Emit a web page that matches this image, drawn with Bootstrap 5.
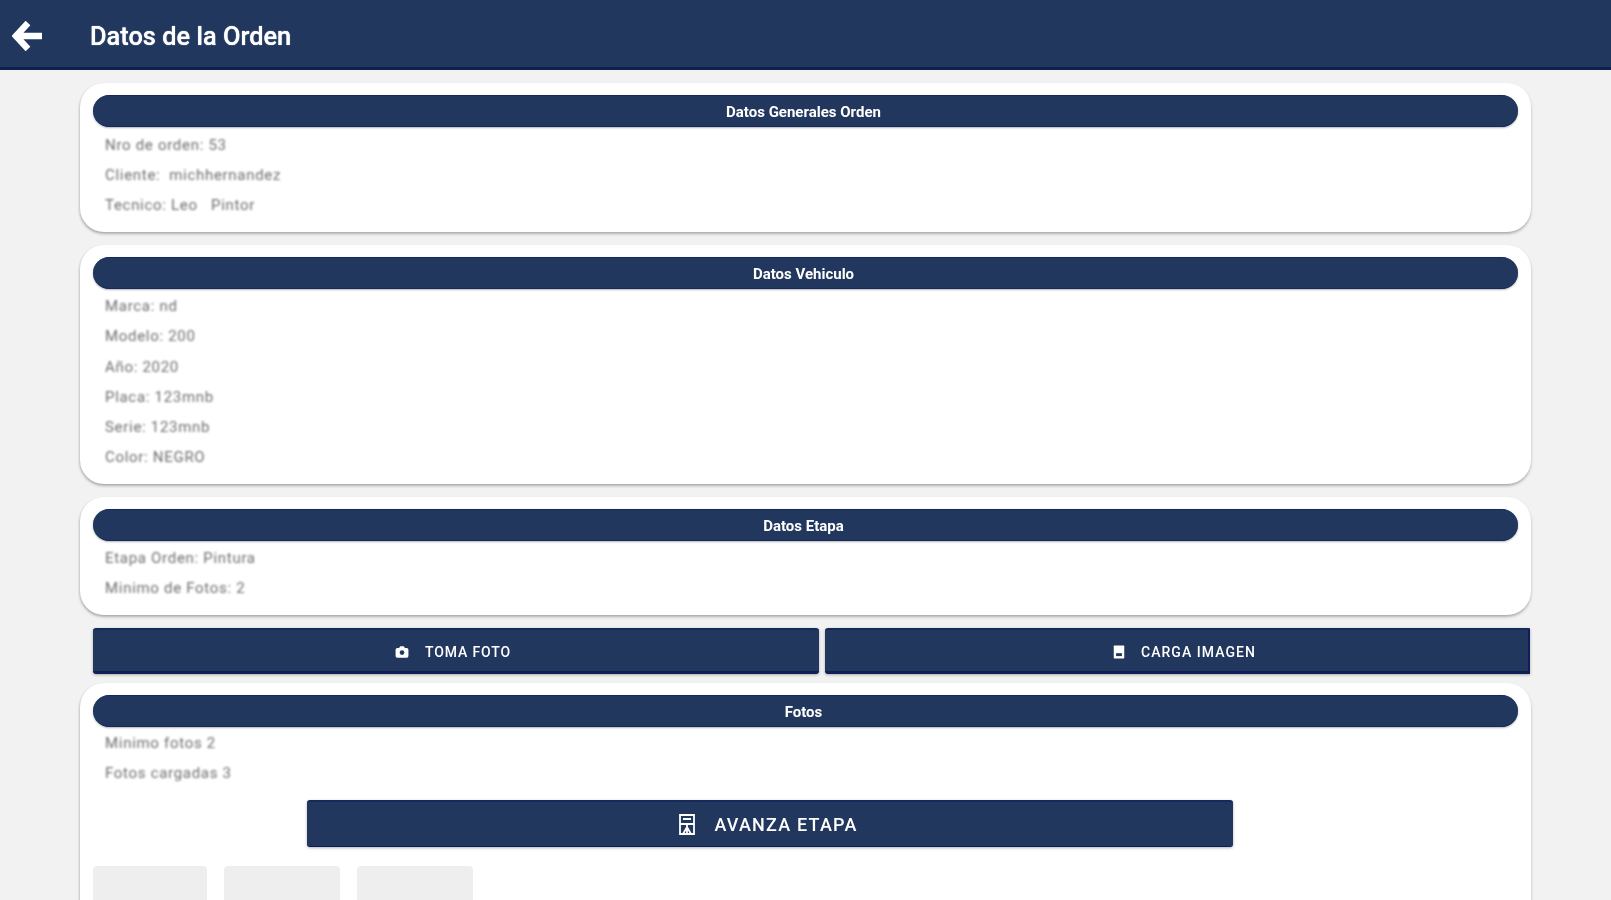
<!DOCTYPE html>
<html lang="es">
<head>
<meta charset="utf-8">
<title>Datos de la Orden</title>
<link rel="stylesheet" href="https://cdn.jsdelivr.net/npm/bootstrap@5.3.0/dist/css/bootstrap.min.css">
<style>
html, body { height: 900px; overflow: hidden; }
body { background: #f2f2f2; font-family: Roboto, sans-serif; color: #6f6f6f; }
.topbar { height: 70px; background: #21375e; border-bottom: 3px solid #0f1f50; color: #fff; padding: 5px 0 0 12px; }
.topbar h1 { font-size: 25.4px; font-weight: 500; margin: 0 0 0 46px; filter: blur(.5px); text-shadow: 0 0 1px #fff; }
.topbar svg { filter: blur(.6px); }
.page-wrap { width: 1451px; margin-left: 80px; padding-top: 13px; }
.info-panel { background: #fff; border-radius: 24px; padding: 12px 13px; margin-bottom: 12.6px; box-shadow: 0 2px 3px rgba(0,0,0,.25), -1px 1px 2px rgba(0,0,0,.08); }
.panel-first { padding-bottom: 11px; margin-bottom: 13.6px; }
.pill-head { height: 32px; background: #21375e; border-radius: 16px; border-top: 1px solid #142a5a; border-bottom: 1px solid #142a5a; color: #fff; font-size: 15px; font-weight: 700; text-align: center; line-height: 30px; padding: 0 4px 0 0; margin-bottom: 2px; box-shadow: 0 1px 2px rgba(0,0,0,.3); }
.pill-head span { filter: blur(.6px); display: inline-block; transform: translateY(1px); }
.pill-loose { margin-bottom: 3px; }
.pill-tight { margin-bottom: 1px; }
.data-row { height: 30.2px; line-height: 30.2px; padding-left: 12px; font-size: 15px; letter-spacing: .7px; white-space: pre; }
.data-row span { filter: blur(.9px); display: inline-block; }
.btn-row { gap: 6px; margin: 0 0 9px 13px; }
.btn-navy { background: #21375e; color: #fff; border: 0; border-top: 2px solid #142a5a; border-bottom: 3px solid #0f1f55; border-radius: 3px; height: 46px; text-transform: uppercase; font-weight: 500; letter-spacing: .85px; box-shadow: 0 1px 3px rgba(0,0,0,.3); }
.btn-navy:hover { background: #21375e; color: #fff; }
.btn-navy svg { filter: blur(.5px); }
.btn-small { font-size: 14px; }
.btn-small .lbl { margin-left: 16px; }
.btn-wide { width: 926px; height: 47px; font-size: 18px; letter-spacing: 1.2px; margin: 12px 0 0 214px; border-bottom-width: 1px; padding: 0 3px 0 0; }
.btn-wide .lbl { margin-left: 19px; }
.lbl { filter: blur(.6px); }
.btn-left { width: 726px; padding: 4px 6px 0 0; }
.btn-right { width: 705px; border-radius: 3px 0 0 3px; border-right: 2px solid #0f1f55; padding: 4px 0 0 16px; letter-spacing: 1.05px; }
.thumb-row { gap: 17px; margin-top: 19px; }
.thumb-box { height: 60px; background: #eee; border-radius: 4px 4px 0 0; }
.t1 { width: 114px; } .t2 { width: 116px; }
</style>
</head>
<body>
<header class="topbar d-flex align-items-center">
  <svg width="32" height="32" viewBox="0 0 32 32" aria-hidden="true"><path d="M16 3 4 16l12 13M5 16h25" fill="none" stroke="#fff" stroke-width="6.5"/></svg>
  <h1>Datos de la Orden</h1>
</header>
<main class="page-wrap">
  <section class="info-panel panel-first">
    <div class="pill-head pill-loose"><span>Datos Generales Orden</span></div>
    <div class="data-row"><span>Nro de orden: 53</span></div>
    <div class="data-row"><span>Cliente:  michhernandez</span></div>
    <div class="data-row"><span>Tecnico: Leo   Pintor</span></div>
  </section>
  <section class="info-panel">
    <div class="pill-head"><span>Datos Vehiculo</span></div>
    <div class="data-row"><span>Marca: nd</span></div>
    <div class="data-row"><span>Modelo: 200</span></div>
    <div class="data-row"><span>Año: 2020</span></div>
    <div class="data-row"><span>Placa: 123mnb</span></div>
    <div class="data-row"><span>Serie: 123mnb</span></div>
    <div class="data-row"><span>Color: NEGRO</span></div>
  </section>
  <section class="info-panel">
    <div class="pill-head"><span>Datos Etapa</span></div>
    <div class="data-row"><span>Etapa Orden: Pintura</span></div>
    <div class="data-row"><span>Minimo de Fotos: 2</span></div>
  </section>
  <div class="d-flex btn-row">
    <button class="btn btn-navy btn-small btn-left d-flex align-items-center justify-content-center" type="button">
      <svg width="14" height="14" viewBox="0 0 24 24" aria-hidden="true"><path fill="#fff" d="M4 5h3l2-3h6l2 3h3a3 3 0 0 1 3 3v11a3 3 0 0 1-3 3H4a3 3 0 0 1-3-3V8a3 3 0 0 1 3-3z"/><circle cx="12" cy="13" r="4" fill="#21375e"/></svg>
      <span class="lbl">Toma Foto</span>
    </button>
    <button class="btn btn-navy btn-small btn-right d-flex align-items-center justify-content-center" type="button">
      <svg width="12" height="14" viewBox="0 0 20 24" aria-hidden="true"><path fill="#fff" d="M2 1h16a1 1 0 0 1 1 1v20a1 1 0 0 1-1 1H2a1 1 0 0 1-1-1V2a1 1 0 0 1 1-1z"/><rect x="5" y="14" width="10" height="5" fill="#21375e"/></svg>
      <span class="lbl">Carga Imagen</span>
    </button>
  </div>
  <section class="info-panel">
    <div class="pill-head pill-tight"><span>Fotos</span></div>
    <div class="data-row"><span>Minimo fotos 2</span></div>
    <div class="data-row"><span>Fotos cargadas 3</span></div>
    <button class="btn btn-navy btn-wide d-flex align-items-center justify-content-center" type="button">
      <svg width="16" height="21" viewBox="0 0 16 21" aria-hidden="true"><path fill="none" stroke="#fff" stroke-width="1.8" d="M1 1h14v19H1zM1 10h14M8 10v10M4 5h8M4 20l4-7 4 7"/></svg>
      <span class="lbl">Avanza Etapa</span>
    </button>
    <div class="d-flex thumb-row">
      <div class="thumb-box t1"></div>
      <div class="thumb-box t2"></div>
      <div class="thumb-box t2"></div>
    </div>
  </section>
</main>
<script src="https://cdn.jsdelivr.net/npm/bootstrap@5.3.0/dist/js/bootstrap.bundle.min.js"></script>
</body>
</html>
